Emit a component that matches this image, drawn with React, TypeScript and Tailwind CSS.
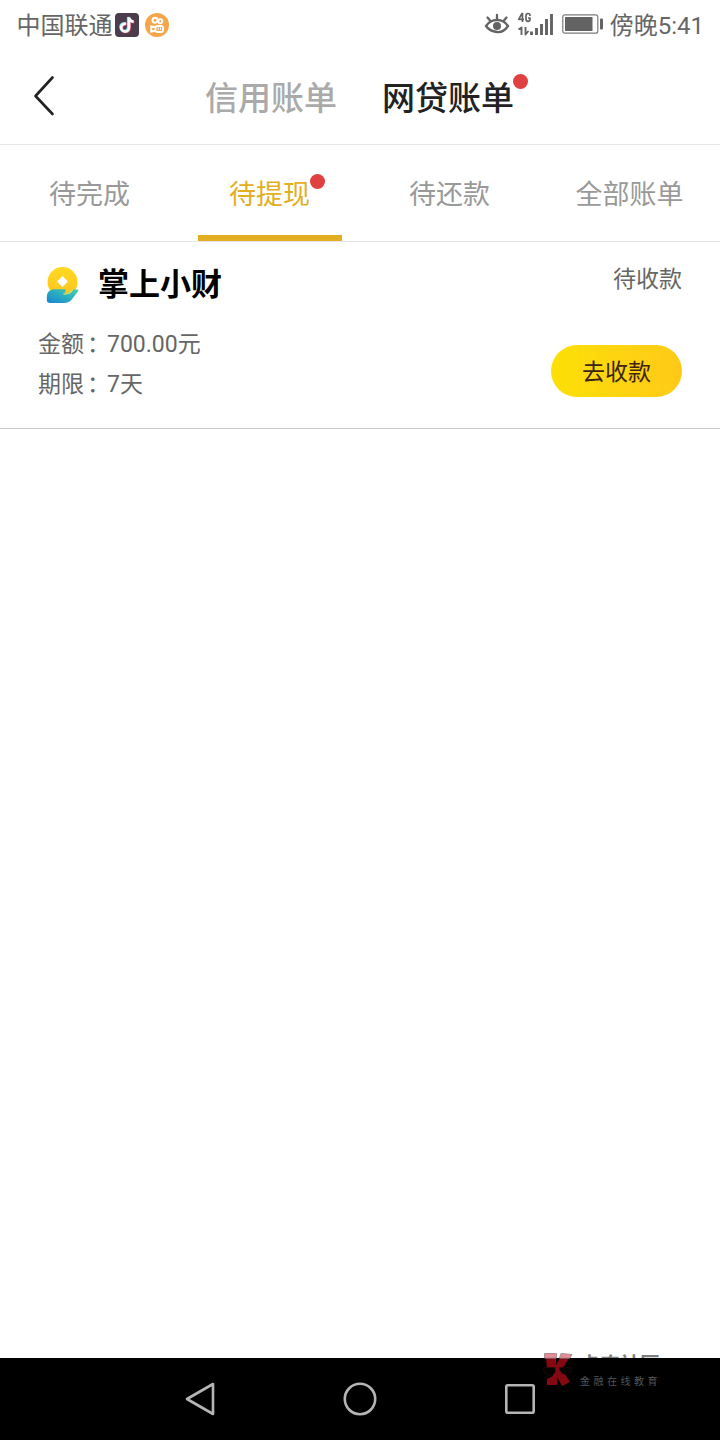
import clsx from "clsx";

interface TabProps {
  label: string;
  isSelected?: boolean;
  hasDot?: boolean;
}

const tabs: TabProps[] = [
  { label: "待完成" },
  { label: "待提现", isSelected: true, hasDot: true },
  { label: "待还款" },
  { label: "全部账单" },
];

function Dot({ className }: { className?: string }) {
  return (
    <span className={clsx("absolute size-[15px] rounded-full bg-[#e04040]", className)} />
  );
}

function StatusBar() {
  return (
    <div className="flex h-12 items-center justify-between pl-[16.5px] pr-4 text-[24px] leading-none text-[#666666]">
      <div className="flex items-center">
        <span className="w-[98.5px] pt-1">中国联通</span>
        <svg width="24" height="24" viewBox="0 0 24 24" className="mt-0.5">
          <rect width="24" height="24" rx="4" fill="#4b3d4c" />
          <g fill="none" strokeWidth="2.6">
            <path d="M11 10.8a3.9 3.9 0 1 0 3 3.8V4.5c.4 2.6 2 4 4.6 4.3" stroke="#e8546e" transform="translate(.7 .5)" />
            <path d="M11 10.8a3.9 3.9 0 1 0 3 3.8V4.5c.4 2.6 2 4 4.6 4.3" stroke="#6de0e4" transform="translate(-.8 -.5)" />
            <path d="M11 10.8a3.9 3.9 0 1 0 3 3.8V4.5c.4 2.6 2 4 4.6 4.3" stroke="#fff" />
          </g>
        </svg>
        <svg width="24" height="24" viewBox="0 0 24 24" className="ml-1.5 mt-0.5">
          <circle cx="12" cy="12" r="12" fill="#f7a54a" />
          <g fill="none" stroke="#fff" strokeWidth="1.9">
            <circle cx="10" cy="7.3" r="2.5" />
            <circle cx="15.3" cy="8.3" r="2" />
            <rect x="10.5" y="13" width="7.5" height="6" rx="1.8" />
            <path d="M10.5 14.3l-4.3-.8v5l4.3-.8" />
            <path d="M13.3 14.5v2.5M15.5 14.5v2.5" strokeWidth="1" />
          </g>
        </svg>
      </div>

      <div className="flex items-center">
        <svg width="26" height="24" viewBox="0 0 26 24" fill="none" stroke="#636363" strokeWidth="2.3" strokeLinecap="round">
          <path d="M2 14C5 9.5 8.5 8 13 8s8 1.5 11 6c-3 4.5-6.5 6.5-11 6S5 18.500 2 14z" />
          <path d="M13 7.5V3M6.5 9L3.500 5.500M19.500 9l3-3.500" />
          <circle cx="13" cy="14" r="4" fill="#636363" stroke="none" />
        </svg>
        <svg width="37" height="26" viewBox="0 0 37 26" fill="none" stroke="#636363" className="ml-[7px]">
          <path d="M5.500 11V2.500H5L1.700 8.300H7M13 5C13 3.200 12.300 2.500 11 2.500S9 3.200 9 5v3c0 1.700.7 2.300 2 2.300s2-.6 2-2.300V7h-2" strokeWidth="1.7" strokeLinejoin="round" />
          <path d="M1.500 18.500l3-2V24M8.500 16v7.500l3-3.500" strokeWidth="1.9" strokeLinejoin="round" />
          <path d="M14.500 20.500V24M19.500 17v7M24.500 13v11M29.500 8v16M34.500 3v21" strokeWidth="2.9" />
        </svg>
        <svg width="42" height="20" viewBox="0 0 42 20" className="ml-2">
          <rect x=".8" y=".8" width="35" height="18.4" rx="2" fill="none" stroke="#7b7b7b" strokeWidth="1.2" />
          <rect x="3" y="3" width="27.5" height="14" fill="#636363" />
          <rect x="38" y="4.5" width="3" height="11" rx="1" fill="#636363" />
        </svg>
        <span className="ml-[6px] whitespace-nowrap pt-[3px]">傍晚5:41</span>
      </div>
    </div>
  );
}

function Header() {
  return (
    <div className="relative flex h-[97px] items-center justify-center gap-[45px] border-b border-[#e5e5e5] pr-px pt-1 text-[33px] font-medium leading-none">
      <svg width="22" height="42" viewBox="0 0 22 42" className="absolute left-[33px] top-[27px]">
        <path d="M19.5 2.5L2.5 21l17 18" fill="none" stroke="#222" strokeWidth="2.6" strokeLinecap="round" strokeLinejoin="round" />
      </svg>
      <span className="text-[#aaaaaa]">信用账单</span>
      <span className="relative text-[#222222]">
        网贷账单
        <Dot className="-right-[14px] -top-2" />
      </span>
    </div>
  );
}

function Tab({ label, isSelected, hasDot }: TabProps) {
  return (
    <div className="flex flex-1 justify-center">
      <div
        className={clsx(
          "flex h-full w-36 items-center justify-center border-b-[6px] pt-2.5",
          isSelected ? "border-[#e3ae20] text-[#e3ae20]" : "border-transparent text-[#999999]"
        )}
      >
        <span className="relative mr-px whitespace-nowrap">
          {label}
          {hasDot && <Dot className="-right-[15px] -top-2" />}
        </span>
      </div>
    </div>
  );
}

function CoinLogo() {
  return (
    <svg width="34" height="38" viewBox="0 0 34 38" className="mt-[3px]">
      <defs>
        <linearGradient id="hand" x1="1" y1="0" x2="0" y2="1">
          <stop offset="0" stopColor="#43d3b0" />
          <stop offset="1" stopColor="#1586d0" />
        </linearGradient>
        <linearGradient id="coin" x1="0" y1="0" x2="0" y2="1">
          <stop offset="0" stopColor="#ffd91f" />
          <stop offset="1" stopColor="#ffc421" />
        </linearGradient>
      </defs>
      <circle cx="16.5" cy="16" r="15" fill="url(#coin)" />
      <path d="M16.500 11l4.500 4.500-4.500 4.500-4.500-4.500z" fill="#fff" stroke="#fff" strokeWidth="1.5" strokeLinejoin="round" />
      <path d="M1.200 28c1-3 3.800-4.800 7.800-4.800h9c2.500 0 2.500 2.800 0 3.800 4 .6 6.500-1 8.500-3.500h5c1.200 0 1.200.8.500 1.800l-6 8c-2 2.700-4.500 3.700-8 3.700H4c-2 0-3.200-1-3.200-3 0-2.500 0-4.500.4-6z" fill="url(#hand)" />
      <path d="M17.500 28c4.500.4 7.500-1.500 9.300-4.500" fill="none" stroke="#e9e35a" strokeWidth="1.3" />
    </svg>
  );
}

function Detail({ label, value }: { label: string; value: string }) {
  return (
    <div className="flex h-10 leading-[39px]">
      <span>{label}</span>
      <span className="w-[23px] pl-[3px] [font-feature-settings:'halt']">：</span>
      <span>{value}</span>
    </div>
  );
}

function LoanCard() {
  return (
    <div className="flex h-[187px] justify-between border-b border-[#c9c9c9] px-[38px] text-[23px] text-[#666666]">
      <div className="flex flex-col">
        <div className="flex h-[83px] items-center gap-[18px] pl-2 text-[31px] font-bold leading-none text-black">
          <CoinLogo />
          <span className="pt-0.5">掌上小财</span>
        </div>
        <Detail label="金额" value="700.00元" />
        <Detail label="期限" value="7天" />
      </div>
      <div className="flex flex-col items-end pt-[18px]">
        <span className="leading-10">待收款</span>
        <button className="mt-[45px] h-[52px] w-[131px] rounded-full bg-linear-to-r from-[#fce005] to-[#ffc917] pt-1 text-[#3d2414]">
          去收款
        </button>
      </div>
    </div>
  );
}

function Watermark() {
  return (
    <div className="absolute left-[543px] top-[-6px] flex h-10 w-[120px] gap-[7px]">
      <svg width="30" height="36" viewBox="0 0 30 36" className="shrink-0">
        <path d="M3 6h10v7l4-7h9l-7 11 8 13-8 4-5-9v8H4v-6l6-3V17L4 16z" fill="#850812" />
        <path d="M1.500 1.500h12V6h-12zM18 1.500l11 1L27 6H16.500z" fill="#e78b97" stroke="#a88e92" />
        <path d="M.5 15.500h11.500c1 5-1 8-5 8s-6.500-3-6.500-8zM16.500 15.500H28c1 5-1 7-5 7s-6.500-3-6.500-7z" fill="#050202" stroke="#2a0c0e" strokeWidth=".6" />
      </svg>
      <div className="flex flex-col whitespace-nowrap pt-[3px]">
        <div className="text-[20px] font-bold leading-5 text-black opacity-50">卡农社区</div>
        <div className="text-[10px] leading-[14px] tracking-[3.5px] text-[#555555]">金融在线教育</div>
      </div>
    </div>
  );
}

function NavBar() {
  return (
    <div className="relative flex h-[82px] items-center justify-center bg-black">
      <div className="flex w-[480px] items-center justify-around">
        <svg width="36" height="36" viewBox="0 0 36 36" fill="none" stroke="#b5b5b5" strokeWidth="2.6" strokeLinejoin="round">
          <path d="M31 3v30L5 18z" />
        </svg>
        <svg width="36" height="36" viewBox="0 0 36 36" fill="none" stroke="#b5b5b5" strokeWidth="2.6">
          <circle cx="18" cy="18" r="15.2" />
        </svg>
        <svg width="36" height="36" viewBox="0 0 36 36" fill="none" stroke="#b5b5b5" strokeWidth="2.6">
          <rect x="4.3" y="4.3" width="27.4" height="27.4" rx="1.5" />
        </svg>
      </div>
      <Watermark />
    </div>
  );
}

export default function App() {
  return (
    <div className="flex h-[1440px] w-[720px] flex-col bg-white font-['Roboto','Noto_Sans_CJK_SC',sans-serif]">
      <StatusBar />
      <Header />
      <div className="flex h-[97px] border-b border-[#e5e5e5] text-[27px] leading-none">
        {tabs.map((tab) => (
          <Tab key={tab.label} {...tab} />
        ))}
      </div>
      <LoanCard />
      <div className="flex-1" />
      <NavBar />
    </div>
  );
}
